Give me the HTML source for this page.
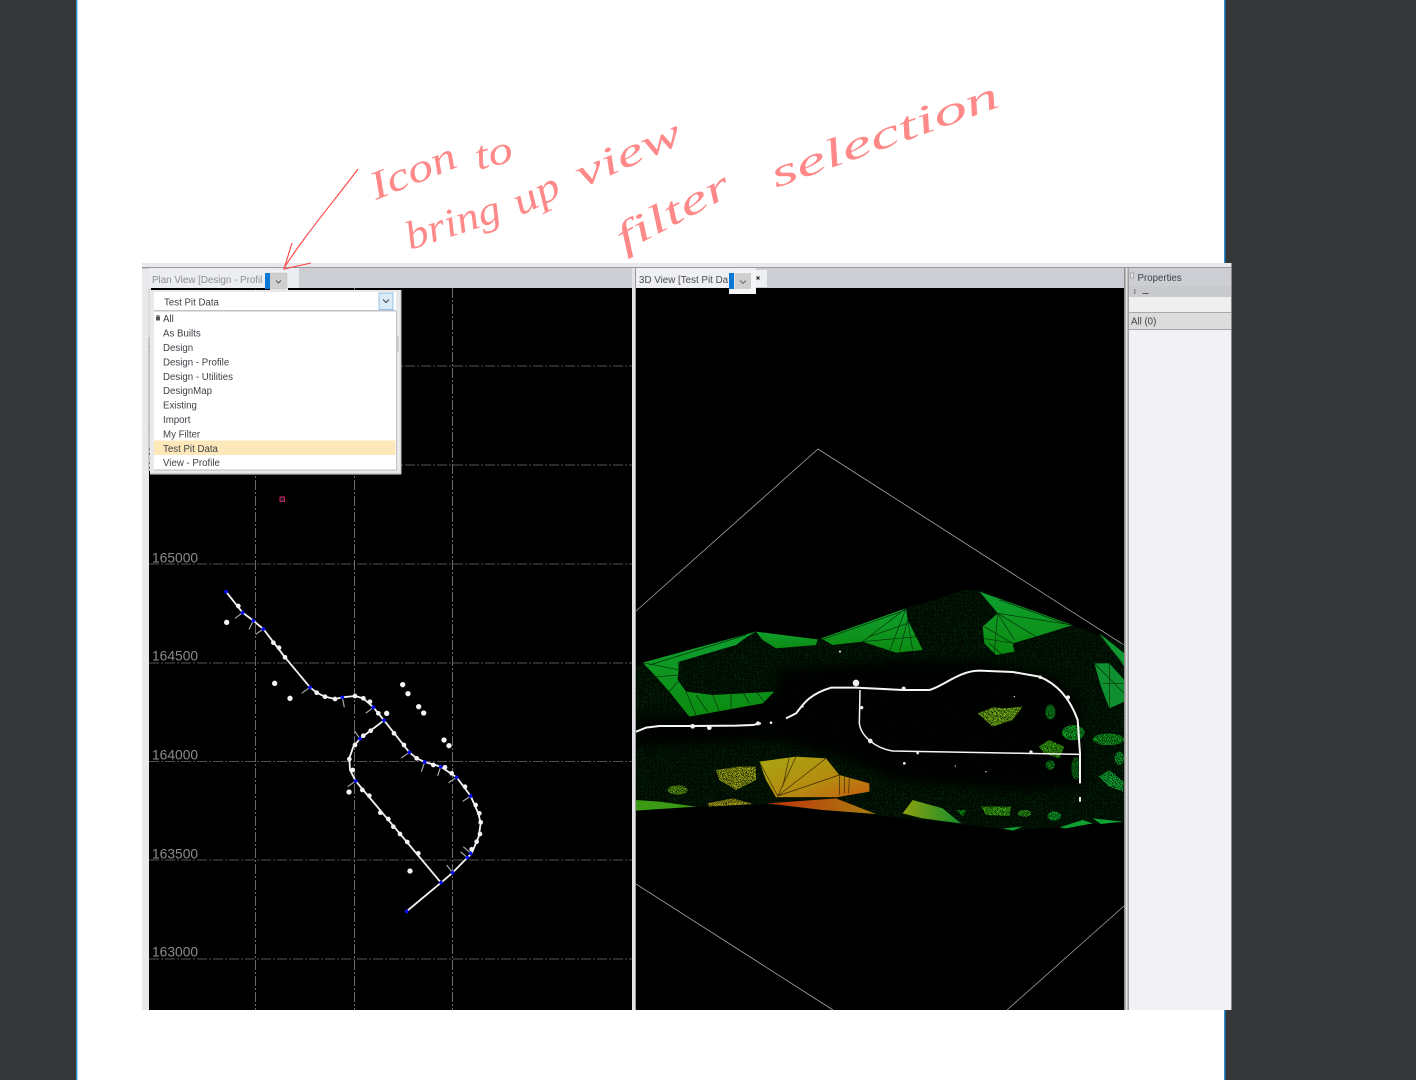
<!DOCTYPE html>
<html><head><meta charset="utf-8"><style>
html,body{margin:0;padding:0;width:1416px;height:1080px;overflow:hidden;background:#343638}
svg{display:block;filter:blur(.3px)}
.ui{font-family:"Liberation Sans",sans-serif;font-size:9.7px;fill:#3f4248}
.ax{font-family:"Liberation Sans",sans-serif;font-size:13.8px;fill:#8c8c8c}
.hw{font-family:"Liberation Serif",serif;font-style:italic;font-size:40px;fill:#f88}
</style></head><body>
<svg width="1416" height="1080" viewBox="0 0 1416 1080" xmlns="http://www.w3.org/2000/svg">
<defs>
<filter id="sp" x="0" y="0" width="1" height="1" color-interpolation-filters="sRGB">
<feTurbulence type="fractalNoise" baseFrequency="0.75" numOctaves="2" seed="4"/>
<feColorMatrix values="0 0 0 0 .02  0 0 0 0 .27  0 0 0 0 .05  0 0 0 10 -6"/>
<feComposite in2="SourceAlpha" operator="in"/>
</filter>
<filter id="bk" x="0" y="0" width="1" height="1" color-interpolation-filters="sRGB">
<feTurbulence type="fractalNoise" baseFrequency="0.6" numOctaves="2" seed="9" result="n"/>
<feColorMatrix in="n" values="0 0 0 0 0  0 0 0 0 0  0 0 0 0 0  0 0 0 10 -5" result="b"/>
<feComposite in="b" in2="SourceAlpha" operator="in" result="c"/>
<feMerge><feMergeNode in="SourceGraphic"/><feMergeNode in="c"/></feMerge>
</filter>
<filter id="soft" x="-.1" y="-.1" width="1.200" height="1.200"><feGaussianBlur stdDeviation="14"/></filter>
<linearGradient id="g1" x1="0" y1="0" x2="0" y2="1"><stop offset="0" stop-color="#0fa030"/><stop offset="1" stop-color="#0c8a10"/></linearGradient>
<linearGradient id="g2" x1="0" y1="0" x2="1" y2="1"><stop offset="0" stop-color="#a9a612"/><stop offset=".6" stop-color="#b58a10"/><stop offset="1" stop-color="#c65f10"/></linearGradient>
<linearGradient id="g3" x1="0" y1="0" x2="1" y2="0"><stop offset="0" stop-color="#c0300a"/><stop offset="1" stop-color="#a88010"/></linearGradient>
<linearGradient id="g4" x1="0" y1="0" x2="1" y2="0"><stop offset="0" stop-color="#8fa010"/><stop offset="1" stop-color="#12902a"/></linearGradient>
</defs>

<!-- page -->
<rect width="1416" height="1080" fill="#343638"/>
<rect x="77" width="1147" height="1080" fill="#fff"/>
<rect x="76" width="1.4" height="1080" fill="#2b8fd6"/>
<rect x="1224" width="1.4" height="1080" fill="#2b8fd6"/>

<!-- handwritten note -->
<g>
<text class="hw" transform="translate(376 200) rotate(-22)" textLength="90" lengthAdjust="spacingAndGlyphs">Icon</text>
<text class="hw" transform="translate(478 170) rotate(-14)" textLength="38" lengthAdjust="spacingAndGlyphs">to</text>
<text class="hw" transform="translate(410 250) rotate(-18)" textLength="98" lengthAdjust="spacingAndGlyphs">bring</text>
<text class="hw" transform="translate(520 216) rotate(-26)" textLength="48" lengthAdjust="spacingAndGlyphs">up</text>
<text class="hw" transform="translate(582 188) rotate(-24)" textLength="112" lengthAdjust="spacingAndGlyphs">view</text>
<text class="hw" transform="translate(624 252) rotate(-28)" textLength="124" lengthAdjust="spacingAndGlyphs">filter</text>
<text class="hw" transform="translate(776 188) rotate(-20)" textLength="240" lengthAdjust="spacingAndGlyphs">selection</text>
</g>

<!-- app frame -->
<rect x="142" y="263" width="1089" height="747" fill="#e9e9ec"/>
<rect x="142" y="267" width="1089" height="1.4" fill="#9a9aa0"/>
<rect x="1231" y="263" width="1" height="747" fill="#8a8a8a"/>
<rect x="149" y="268" width="483" height="20" fill="#cdced4"/>
<rect x="636" y="268" width="488" height="20" fill="#cdced4"/>

<!-- plan pane -->
<rect x="149" y="288" width="483.500" height="722" fill="#000"/>
<g stroke="#555" stroke-width="1" stroke-dasharray="10 2 2 2" fill="none">
<path d="M149 366H632M149 465H632M149 564H632M149 663H632M149 761.500H632M149 860H632M149 959H632"/>
<path d="M255.500 288V1010M354.500 288V1010M452.500 288V1010" stroke="#6a6a6a"/>
</g>
<text class="ax" x="152" y="562.500">165000</text>
<text class="ax" x="152" y="660.500">164500</text>
<text class="ax" x="152" y="759.500">164000</text>
<text class="ax" x="152" y="858.500">163500</text>
<text class="ax" x="152" y="956.500">163000</text>
<rect x="280" y="497" width="4.500" height="4.500" fill="#2a1a2a" stroke="#d0206a"/>

<g transform="translate(200 570) scale(.33333)">
<path d="M128 128L105 145M160 152L147 178M190 177L167 193M330 352L305 370M427 382L433 412M520 412L497 430M628 547L604 564M674 576L664 605M722 590L713 618M770 622L746 638M812 678L788 694M812 850L790 830M802 863L782 845M758 908L740 885M480 506L463 482M467 633L443 650" stroke="#aaa" stroke-width="3.500" fill="none"/>
<path d="M78 65L128 128L160 152L190 177L255 262L330 352L350 368L375 380L405 387L427 382L465 378L490 385L520 412L552 451L628 547L650 565L674 576L722 590L770 622L812 678L835 730L842 760L836 800L815 850L802 863L758 908L723 938L620 1024M552 451L480 506L460 530L448 565L450 600L467 633L723 938" fill="none" stroke="#f2f2f2" stroke-width="5.500" stroke-linejoin="round"/>
<g fill="#f4f4f4">
<circle cx="80" cy="157" r="8"/><circle cx="224" cy="340" r="8"/><circle cx="270" cy="385" r="8"/><circle cx="608" cy="344" r="8"/><circle cx="624" cy="371" r="8"/><circle cx="656" cy="410" r="8"/><circle cx="671" cy="429" r="8"/><circle cx="732" cy="510" r="8"/><circle cx="747" cy="527" r="8"/><circle cx="560" cy="430" r="8"/><circle cx="447" cy="666" r="8"/><circle cx="630" cy="903" r="8"/>
<circle cx="115" cy="108" r="7"/><circle cx="220" cy="218" r="7"/><circle cx="237" cy="233" r="7"/><circle cx="255" cy="262" r="7"/><circle cx="350" cy="368" r="7"/><circle cx="375" cy="380" r="7"/><circle cx="405" cy="387" r="7"/><circle cx="465" cy="378" r="7"/><circle cx="490" cy="385" r="7"/><circle cx="510" cy="395" r="7"/><circle cx="535" cy="430" r="7"/><circle cx="582" cy="490" r="7"/><circle cx="612" cy="525" r="7"/><circle cx="650" cy="565" r="7"/><circle cx="700" cy="585" r="7"/><circle cx="735" cy="592" r="7"/><circle cx="755" cy="610" r="7"/><circle cx="795" cy="650" r="7"/><circle cx="827" cy="705" r="7"/><circle cx="838" cy="730" r="7"/><circle cx="842" cy="757" r="7"/><circle cx="840" cy="792" r="7"/><circle cx="830" cy="815" r="7"/><circle cx="815" cy="838" r="7"/><circle cx="512" cy="482" r="7"/><circle cx="490" cy="497" r="7"/><circle cx="465" cy="525" r="7"/><circle cx="448" cy="567" r="7"/><circle cx="458" cy="600" r="7"/><circle cx="508" cy="677" r="7"/><circle cx="487" cy="660" r="7"/><circle cx="541" cy="728" r="7"/><circle cx="565" cy="747" r="7"/><circle cx="580" cy="770" r="7"/><circle cx="600" cy="792" r="7"/><circle cx="622" cy="816" r="7"/><circle cx="655" cy="850" r="7"/>
</g>
<g fill="#0a10ff">
<circle cx="78" cy="65" r="5.500"/><circle cx="128" cy="128" r="5.500"/><circle cx="160" cy="152" r="5.500"/><circle cx="190" cy="177" r="5.500"/><circle cx="330" cy="352" r="5.500"/><circle cx="427" cy="382" r="5.500"/><circle cx="520" cy="412" r="5.500"/><circle cx="552" cy="451" r="5.500"/><circle cx="628" cy="547" r="5.500"/><circle cx="674" cy="576" r="5.500"/><circle cx="722" cy="590" r="5.500"/><circle cx="770" cy="622" r="5.500"/><circle cx="812" cy="678" r="5.500"/><circle cx="812" cy="850" r="5.500"/><circle cx="802" cy="863" r="5.500"/><circle cx="758" cy="908" r="5.500"/><circle cx="723" cy="938" r="5.500"/><circle cx="620" cy="1024" r="5.500"/><circle cx="480" cy="506" r="5.500"/><circle cx="467" cy="633" r="5.500"/>
</g>
</g>

<!-- 3D pane -->
<rect x="636" y="288" width="488" height="722" fill="#000"/>
<path d="M636 611L818 449L1124 645M636 884L833 1010M1124 906L1007 1010" fill="none" stroke="#a5a5a5" stroke-width=".8"/>
<g transform="translate(636 580) scale(.33333)">
<!-- speckled mass -->
<path d="M0 260L20 248L360 155L545 178L810 85L985 30L1030 30L1310 135L1465 195V725L1130 752L975 732L720 705L390 675L180 680L0 692Z" fill="#010a02"/>
<path d="M0 260L20 248L360 155L545 178L810 85L985 30L1030 30L1310 135L1465 195V725L1130 752L975 732L720 705L390 675L180 680L0 692Z" fill="#000" filter="url(#sp)"/>
<!-- dark lane -->
<path d="M430 270L800 240L1030 240L1260 290L1330 360L1350 620L1150 630L780 600L640 540L420 480L200 490L0 500L0 410L130 410L420 340Z" fill="#000" opacity=".85" filter="url(#soft)"/>
<!-- clean upper facets -->
<path d="M20 248L360 155L330 172L300 195L130 245L125 300L150 335L230 345L415 335L380 370L160 410L100 335L60 290Z" fill="url(#g1)"/>
<path d="M360 155L545 178L540 195L420 205L380 180Z" fill="url(#g1)"/>
<path d="M555 175L810 85L815 120L860 210L780 218L680 185L590 195Z" fill="url(#g1)"/>
<path d="M1030 35L1310 135L1200 170L1130 190L1135 215L1080 225L1045 190L1040 140L1085 100Z" fill="url(#g1)"/>
<path d="M1390 160L1465 220V260L1420 200Z" fill="#0e9a30"/>
<path d="M1375 250L1420 250L1465 300V365L1420 385L1395 320Z" fill="#0e9030"/>
<path d="M370 545L480 530L570 535L610 585L700 610L700 635L600 652L420 652L390 600Z" fill="url(#g2)"/>
<path d="M395 670L600 655L720 702L560 690Z" fill="url(#g3)"/>
<path d="M800 700L830 660L920 685L975 730L860 715Z" fill="url(#g4)"/>
<path d="M0 660L70 665L180 680L0 692Z" fill="#3a9a14"/>
<!-- textured blobs -->
<g filter="url(#bk)">
<path d="M1025 400L1070 382L1110 385L1160 380L1130 420L1070 440Z" fill="#74b418"/>
<ellipse cx="1243" cy="396" rx="15" ry="22" fill="#0c8a1a"/>
<ellipse cx="1312" cy="458" rx="34" ry="23" fill="#10a824"/>
<ellipse cx="1418" cy="478" rx="48" ry="17" fill="#10a020"/>
<path d="M1208 500L1240 480L1285 500L1270 535L1225 520Z" fill="#38a812"/>
<ellipse cx="1243" cy="555" rx="14" ry="14" fill="#0c8a1a"/>
<ellipse cx="1320" cy="565" rx="14" ry="34" fill="#0a7014"/>
<path d="M1388 590L1420 570L1462 605V635L1420 620Z" fill="#12b038"/>
<ellipse cx="1450" cy="535" rx="14" ry="20" fill="#0c9a28"/>
<path d="M215 670L290 655L350 672L220 680Z" fill="#b0a818"/>
<path d="M240 570L310 560L360 560L360 600L300 630L250 600Z" fill="#9aa814"/>
<ellipse cx="125" cy="630" rx="30" ry="14" fill="#5a9a14"/>
<path d="M1035 680L1125 680L1120 708L1050 705Z" fill="#38a812"/>
<ellipse cx="1165" cy="700" rx="20" ry="10" fill="#2ca018"/>
<ellipse cx="1255" cy="708" rx="20" ry="14" fill="#10a028"/>
<path d="M960 690L990 690L980 710Z" fill="#0c8a14"/>
</g>
<path d="M1270 742L1340 720L1370 730L1290 745Z" fill="#0ea030"/>
<path d="M1370 715L1462 725L1395 732Z" fill="#0ea030"/>
<path d="M1100 745L1160 740L1130 752Z" fill="#0ea030"/>
<!-- facet lines -->
<g fill="none" stroke="#03330a" stroke-width="2">
<path d="M20 248L130 270L125 245M60 290L130 285M100 335L130 300M40 255L330 165M150 335L180 405M180 345L215 395M230 345L250 395M285 340L285 388M320 335L340 370M360 335L385 365"/>
<path d="M810 85L680 185M810 85L760 215M815 120L790 215M815 120L830 210M700 170L815 130M560 178L810 90M680 185L840 170"/>
<path d="M1030 35L1085 100M1085 100L1310 135M1085 100L1200 170M1085 100L1135 180M1085 100L1075 220M1045 140L1130 190M1040 175L1135 190M1090 60L1300 135M1060 190L1100 225"/>
<path d="M1375 250L1465 340M1400 310L1465 310M1420 250L1420 385M1390 165L1460 250"/>
</g>
<g fill="none" stroke="#3a2a04" stroke-width="2">
<path d="M370 545L425 648M480 530L425 648M570 535L425 648M610 585L425 648M460 530L440 620M610 585L610 645M625 585L625 640M640 590L638 640M420 652H600"/>
</g>
<!-- road -->
<g fill="none" stroke="#f6f6f6" stroke-width="6" stroke-linejoin="round">
<path d="M0 455L30 443L70 438L170 438L300 437L350 435L375 430"/>
<path d="M450 415L480 400C495 385 510 345 585 323L660 323L800 330L880 330C920 320 970 272 1030 272L1130 276L1210 290C1260 310 1300 350 1325 420L1332 520L1332 610"/>
<path d="M672 330L670 430C675 470 720 505 770 513L1000 517L1170 520L1332 523" stroke-width="4.500"/>
</g>
<g fill="#f0f0f0">
<rect x="1329" y="651" width="6" height="14"/>
<circle cx="660" cy="309" r="10"/><circle cx="170" cy="439" r="7"/><circle cx="220" cy="443" r="7"/><circle cx="366" cy="430" r="6"/><circle cx="803" cy="326" r="6"/><circle cx="703" cy="483" r="7"/><circle cx="1296" cy="352" r="6"/><circle cx="1213" cy="292" r="5"/><circle cx="1185" cy="516" r="5"/><circle cx="677" cy="383" r="5"/><circle cx="405" cy="428" r="4"/><circle cx="805" cy="550" r="4"/><circle cx="845" cy="519" r="4"/><circle cx="612" cy="215" r="3"/><circle cx="500" cy="380" r="3"/><circle cx="1135" cy="350" r="2"/><circle cx="958" cy="558" r="2"/><circle cx="1050" cy="575" r="2"/>
</g>
</g>

<!-- splitters -->
<rect x="632" y="268" width="4" height="742" fill="#e4e4e6"/>
<rect x="635" y="268" width="1" height="742" fill="#9a9a9a"/>
<rect x="1124" y="268" width="1.500" height="742" fill="#8e8e8e"/>
<rect x="1125.500" y="268" width="2" height="742" fill="#e2e2e2"/>
<rect x="1127.500" y="268" width="1.500" height="742" fill="#a0a0a0"/>

<!-- properties -->
<rect x="1129" y="268" width="102" height="742" fill="#f1f1f6"/>
<rect x="1129" y="268" width="102" height="18" fill="#cdced4"/>
<rect x="1129" y="286" width="102" height="11" fill="#c9cacd"/>
<rect x="1129" y="297" width="102" height="15" fill="#efeff0"/>
<rect x="1129" y="312" width="102" height="17" fill="#dcdcdc"/>
<rect x="1129" y="312" width="102" height="1" fill="#a8a8a8"/>
<rect x="1129" y="329" width="102" height="1" fill="#a8a8a8"/>
<rect x="1130.500" y="273" width="3" height="5" fill="#e8e8e8" stroke="#888" stroke-width=".6"/>
<rect x="1134" y="289" width="1.500" height="5" fill="#909090"/>
<text class="ui" x="1137.500" y="281">Properties</text>
<rect x="1142.500" y="293" width="6" height="1" fill="#555"/>
<text class="ui" x="1131" y="324.500">All (0)</text>

<!-- plan tab -->
<rect x="149" y="268" width="150" height="20" fill="#ecedf0"/>
<rect x="150" y="288" width="116" height="1.500" fill="#000"/>
<text class="ui" x="152" y="283" style="fill:#8c8e94;font-size:9.800px">Plan View [Design - Profil</text>
<rect x="265" y="273" width="5" height="16" fill="#0a78d6"/>
<rect x="270" y="271" width="18" height="21" fill="#f6f6f6"/>
<rect x="270.500" y="273" width="16.500" height="16" fill="#cfcfcf" stroke="#bdbdbd" stroke-width=".6"/>
<path d="M276 280.500L278.500 283L281 280.500" fill="none" stroke="#555" stroke-width=".9"/>

<!-- 3D tab -->
<rect x="636" y="268" width="120" height="20" fill="#eff0f3"/>
<rect x="756" y="270" width="11" height="17" fill="#eff0f3"/>
<text class="ui" x="639" y="283" style="fill:#4a4c52;font-size:9.800px">3D View [Test Pit Da</text>
<rect x="729" y="273" width="5.500" height="16" fill="#0a78d6"/>
<rect x="729" y="289" width="27" height="5" fill="#f6f6f6"/>
<rect x="734" y="271" width="22" height="23" fill="#f6f6f6"/>
<rect x="734.500" y="273" width="16.500" height="16" fill="#cfcfcf"/>
<path d="M740 280.500L743 283.500L746 280.500" fill="none" stroke="#666" stroke-width=".9"/>
<path d="M756.500 276.500L759.500 279.500M759.500 276.500L756.500 279.500" stroke="#222" stroke-width="1.100"/>

<!-- residual list behind dropdown -->
<rect x="148" y="288" width="3" height="49" fill="#dcdcde"/>
<rect x="148" y="337" width="6" height="134" fill="#c6c6c8"/>
<text class="ui" x="149.500" y="347">A</text><text class="ui" x="149.500" y="362">D</text><text class="ui" x="149.500" y="376">D</text><text class="ui" x="149.500" y="391">D</text><text class="ui" x="149.500" y="405">E</text><text class="ui" x="149.500" y="420">F</text><text class="ui" x="149.500" y="438">T</text><text class="ui" x="148.500" y="455">3</text><text class="ui" x="148.500" y="469">3</text>

<!-- dropdown -->
<rect x="150" y="290" width="251" height="184.500" fill="#e9e9ea"/>
<rect x="400.500" y="290" width="1" height="184" fill="#c4c4c4"/>
<rect x="150" y="473.500" width="251" height="1.200" fill="#a8a8a8"/>
<rect x="154" y="292" width="242" height="18" fill="#fff"/>
<rect x="154" y="310" width="242" height="1.500" fill="#c0c2c8"/>
<rect x="379" y="293" width="14" height="16.500" fill="#d9ecf8" stroke="#7fb7dd" stroke-width=".8"/>
<path d="M383 299.500L386 302.500L389 299.500" fill="none" stroke="#444" stroke-width="1"/>
<text class="ui" x="164" y="305.500">Test Pit Data</text>
<rect x="154" y="311.500" width="242" height="158" fill="#fff"/>
<rect x="396" y="311" width="1" height="159" fill="#c0c2c8"/>
<rect x="154" y="469.500" width="243" height="1.200" fill="#c0c2c8"/>
<rect x="397" y="336" width="2" height="16" fill="#cfcfcf"/>
<rect x="154" y="440.500" width="241.500" height="14.500" fill="#fde8b9"/>
<rect x="156" y="316.500" width="4" height="4" fill="#555"/>
<path d="M157 316.500V315.500H159V316.500" fill="none" stroke="#555" stroke-width=".7"/>
<text class="ui" x="163" y="322">All</text>
<text class="ui" x="163" y="336.500">As Builts</text>
<text class="ui" x="163" y="351">Design</text>
<text class="ui" x="163" y="365.300">Design - Profile</text>
<text class="ui" x="163" y="379.800">Design - Utilities</text>
<text class="ui" x="163" y="394.200">DesignMap</text>
<text class="ui" x="163" y="408.700">Existing</text>
<text class="ui" x="163" y="423">Import</text>
<text class="ui" x="163" y="437.400">My Filter</text>
<text class="ui" x="163" y="451.800">Test Pit Data</text>
<text class="ui" x="163" y="466.200">View - Profile</text>

<!-- arrow over the tab -->
<path d="M358 169C335 200 305 235 284 268M292 243L284 269L311 263" fill="none" stroke="#f44" stroke-width="1.100"/>
</svg>
</body></html>
